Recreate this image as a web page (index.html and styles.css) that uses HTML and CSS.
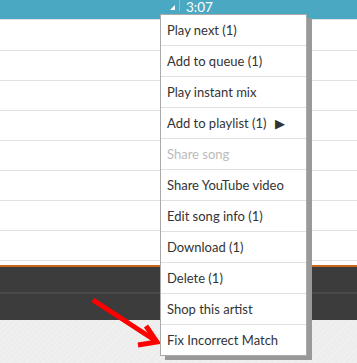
FILE: index.html
```html
<!DOCTYPE html>
<html lang="en">
<head>
  <meta charset="UTF-8">
  <title>Song menu</title>
  <link rel="stylesheet" href="styles.css">
</head>
<body>

  <!-- Now playing bar -->
  <div class="topbar">
    <span class="corner"></span>
    <span class="divider"></span>
    <span class="time">3:07</span>
  </div>

  <!-- Song list rows (empty) -->
  <div class="rows">
    <div class="row"></div>
    <div class="row"></div>
    <div class="row"></div>
    <div class="row"></div>
    <div class="row"></div>
    <div class="row"></div>
    <div class="row"></div>
    <div class="row"></div>
  </div>

  <div class="player">
    <div class="player-top"></div>
    <div class="player-bottom"></div>
  </div>

  <div class="floor"></div>

  <!-- Red arrow pointing at the last item -->
  <svg class="arrow" width="80" height="60" viewBox="0 0 80 60">
    <path d="M13 10 L76 51" stroke="#f00" stroke-width="5" fill="none"/>
    <path d="M66 36 L77 52 L58 55" stroke="#f00" stroke-width="5" fill="none"/>
  </svg>

  <!-- Context menu -->
  <ul class="menu">
    <li>Play next (1)</li>
    <li>Add to queue (1)</li>
    <li>Play instant mix</li>
    <li>Add to playlist (1) <span class="sub">&#9654;</span></li>
    <li class="disabled">Share song</li>
    <li>Share YouTube video</li>
    <li>Edit song info (1)</li>
    <li>Download (1)</li>
    <li>Delete (1)</li>
    <li>Shop this artist</li>
    <li>Fix Incorrect Match</li>
  </ul>

</body>
</html>
```

FILE: styles.css
```css
body {
  margin: 0;
  font-family: Lato, "Open Sans", sans-serif;
  background-color: #fff;
  width: 357px;
  height: 363px;
  overflow: hidden;
}

.topbar {
  height: 19px;
  background-color: #4aa8c2;
  border-bottom: 1px solid #e2e2e2;
  display: flex;
  align-items: flex-start;
  padding-left: 170px;
  color: #fff;
}

.corner {
  width: 0;
  height: 0;
  border-left: 5px solid transparent;
  border-bottom: 5px solid #fff;
  margin-top: 5px;
}

.divider {
  width: 1px;
  height: 11px;
  background-color: #7cc2d5;
  margin: 0 6px 0 4px;
}

.time {
  font-size: 13.5px;
  line-height: 17px;
  margin-top: -1px;
}

.rows {
  padding-top: 1px;
}

.row {
  height: 30px;
  border-bottom: 1px solid #e2e2e2;
  box-sizing: border-box;
}

.player {
  margin-top: 4px;
  border-top: 2px solid #c8671e;
}

.player-top {
  height: 25px;
  background-color: #3c3c3c;
  border-bottom: 2px solid #4a4a4a;
}

.player-bottom {
  height: 26px;
  background-color: #3c3c3c;
}

.floor {
  height: 60px;
  background-color: #ededed;
  background-image: repeating-linear-gradient(135deg, #f1f1f1 0 1px, transparent 1px 4px);
}

.arrow {
  position: absolute;
  left: 80px;
  top: 290px;
}

/* Context menu */
.menu {
  position: absolute;
  left: 160px;
  top: 14px;
  width: 145px;
  margin: 0;
  padding: 0;
  list-style: none;
  background-color: #fff;
  border: 1px solid #aaa;
  box-shadow: 5px 4px 0 #999;
}

.menu li {
  height: 30px;
  line-height: 31px;
  padding-left: 6px;
  font-size: 13px;
  color: #333;
  border-top: 1px solid #e0e0e0;
}

.menu li:first-child {
  border-top: none;
}

.menu li.disabled {
  color: #bbb;
}

.menu .sub {
  font-size: 13px;
  margin-left: 5px;
  color: #333;
}
```
